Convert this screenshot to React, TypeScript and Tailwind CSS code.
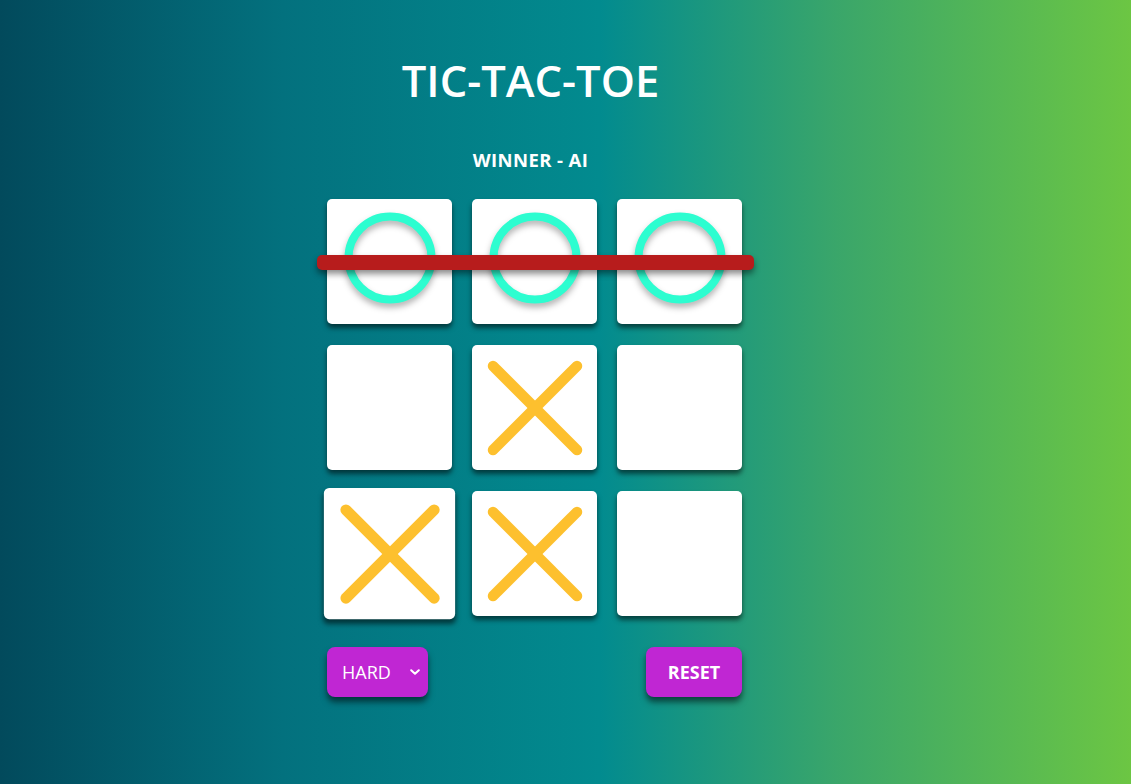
import React from 'react';

type Mark = 'O' | 'X' | null;

function OMark() {
  return (
    <svg viewBox="0 0 100 100" className="w-[100px] h-[100px] drop-shadow-[0_4px_3px_rgba(0,0,0,0.3)]">
      <circle cx="50" cy="46" r="41.5" fill="none" stroke="#2dfdd0" strokeWidth="8" />
    </svg>
  );
}

function XMark() {
  return (
    <svg viewBox="0 0 100 100" className="w-[100px] h-[100px]">
      <g stroke="#fdc02e" strokeWidth="10.5" strokeLinecap="round">
        <line x1="8" y1="8" x2="92" y2="92" />
        <line x1="92" y1="8" x2="8" y2="92" />
      </g>
    </svg>
  );
}

export default function App() {
  const board: Mark[] = ['O', 'O', 'O', null, 'X', null, 'X', 'X', null];

  return (
    <div
      className="w-full h-[784px] overflow-hidden flex justify-center bg-[linear-gradient(to_right,#024a5c_0%,#03717e_25%,#028b8f_53%,#3aa66a_74%,#6cc643_100%)]"
      style={{ fontFamily: '"Open Sans", "Noto Sans", sans-serif' }}
    >
      <div className="flex flex-col items-center pr-[62px]">
        <h1 className="mt-[53px] mr-[8px] text-[43.5px] leading-[56px] font-semibold text-white">TIC-TAC-TOE</h1>
        <div className="mt-[39px] mr-[8px] text-[18.5px] leading-[24px] font-bold text-white tracking-[0.4px]">WINNER - AI</div>

        <div className="relative mt-[27px] grid grid-cols-[125px_125px_125px] gap-x-[20px] gap-y-[21px]">
          {board.map((m, i) => (
            <div
              key={i}
              className={`w-[125px] h-[125px] bg-white rounded-[5px] shadow-[0_4px_5px_rgba(0,0,0,0.55)] flex items-center justify-center ${i === 6 ? 'scale-[1.05]' : ''}`}
            >
              {m === 'O' && <OMark />}
              {m === 'X' && <XMark />}
            </div>
          ))}
          {/* winning strike */}
          <div className="absolute left-[-10px] top-[56px] w-[437px] h-[15px] rounded-[5px] bg-[#b71c1c] shadow-[0_4px_6px_rgba(0,0,0,0.45)]" />
        </div>

        <div className="mt-[31px] w-[415px] flex justify-between">
          <div className="relative w-[101px] h-[50px] rounded-[8px] bg-[#c026d3] shadow-[0_5px_6px_rgba(0,0,0,0.55)] flex items-center pl-[15px] text-white text-[18px]">
            <span>HARD</span>
            <svg viewBox="0 0 10 6" className="absolute right-[8px] top-[22px] w-[10px] h-[6px]">
              <path d="M1.2 1.2 L5 4.8 L8.8 1.2" fill="none" stroke="white" strokeWidth="2" strokeLinecap="round" strokeLinejoin="round" />
            </svg>
          </div>
          <button className="w-[96px] h-[50px] rounded-[8px] bg-[#c026d3] shadow-[0_5px_6px_rgba(0,0,0,0.55)] text-white text-[18px] font-bold">
            RESET
          </button>
        </div>
      </div>
    </div>
  );
}
